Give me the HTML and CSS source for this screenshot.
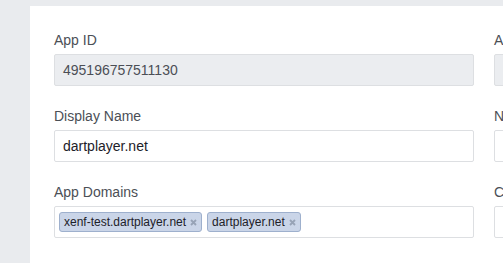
FILE: index.html
```
<!DOCTYPE html>
<html>
<head>
<meta charset="utf-8">
<link rel="stylesheet" href="styles.css">
</head>
<body>
<div class="panel">
  <div class="grid">
    <div class="field">
      <div class="label">App ID</div>
      <div class="input disabled">495196757511130</div>
    </div>
    <div class="field">
      <div class="label">App Secret</div>
      <div class="input disabled">••••••••</div>
    </div>
    <div class="field">
      <div class="label">Display Name</div>
      <div class="input">dartplayer.net</div>
    </div>
    <div class="field">
      <div class="label">Namespace</div>
      <div class="input"></div>
    </div>
    <div class="field">
      <div class="label">App Domains</div>
      <div class="input tags">
        <span class="tag">xenf-test.dartplayer.net<svg class="x" width="7" height="7" viewBox="0 0 7 7"><path d="M1 1L6 6M6 1L1 6" stroke="#97a3b6" stroke-width="1.8"/></svg></span>
        <span class="tag">dartplayer.net<svg class="x" width="7" height="7" viewBox="0 0 7 7"><path d="M1 1L6 6M6 1L1 6" stroke="#97a3b6" stroke-width="1.8"/></svg></span>
      </div>
    </div>
    <div class="field">
      <div class="label">Category</div>
      <div class="input"></div>
    </div>
  </div>
</div>
</body>
</html>
```
FILE: styles.css
```
html, body {
  margin: 0;
  padding: 0;
}
body {
  background: #e9ebee;
  width: 503px;
  height: 263px;
  overflow: hidden;
  font-family: "Liberation Sans", Arial, sans-serif;
}
.panel {
  margin: 6px 0 0 30px;
  background: #fff;
  width: 1000px;
  height: 400px;
  padding: 25px 0 0 24px;
  box-sizing: border-box;
}
.grid {
  display: grid;
  grid-template-columns: 420px 420px;
  column-gap: 20px;
  row-gap: 21px;
}
.label {
  font-size: 14px;
  line-height: 18px;
  color: #4b4f56;
  margin-bottom: 5px;
  white-space: nowrap;
}
.input {
  box-sizing: border-box;
  height: 32px;
  border: 1px solid #dddfe2;
  border-radius: 2px;
  padding: 0 8px;
  font-size: 14px;
  line-height: 30px;
  color: #1d2129;
  background: #fff;
}
.input.disabled {
  background: #ebedf0;
  color: #4b4f56;
}
.tags {
  display: flex;
  align-items: flex-start;
  gap: 5px;
  padding: 5px 4px;
}
.tag {
  display: flex;
  align-items: center;
  box-sizing: border-box;
  height: 20px;
  padding: 0 4px 0 4px;
  background: #cad5e8;
  border: 1px solid #9eb0cd;
  border-radius: 3px;
  font-size: 12px;
  line-height: 18px;
  color: #1d2129;
  white-space: nowrap;
}
.x {
  margin-left: 4px;
  display: block;
}
```
